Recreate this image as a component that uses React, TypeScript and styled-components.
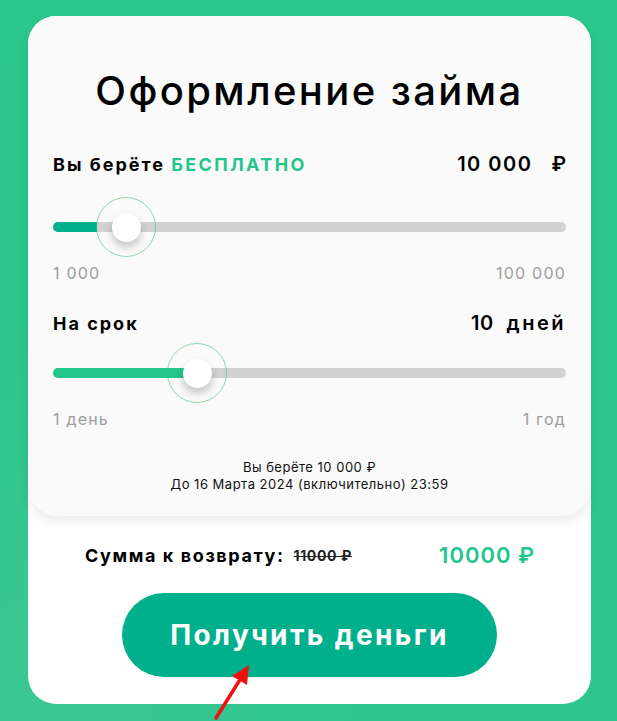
import React from "react";
import styled, { createGlobalStyle } from "styled-components";

const GlobalStyle = createGlobalStyle`
  html, body { margin: 0; padding: 0; }
  body {
    font-family: Inter, "DejaVu Sans", sans-serif;
    background: #2dc68d;
  }
  * { box-sizing: border-box; }
`;

const Page = styled.div`
  position: relative;
  width: 617px;
  height: 721px;
  padding: 16px 26px 17px 28px;
  background: radial-gradient(circle at 10% 95%, #3cc793 0%, #2dc68d 40%, #2bc78b 100%);
  overflow: hidden;
`;

const OuterCard = styled.div`
  width: 563px;
  height: 688px;
  background: #ffffff;
  border-radius: 28px;
  display: flex;
  flex-direction: column;
`;

const Calculator = styled.div`
  background: #fafafa;
  border-radius: 28px 28px 30px 30px;
  box-shadow: 0 6px 12px rgba(0, 0, 0, 0.08);
  padding: 51px 25px 23px;
  display: flex;
  flex-direction: column;
`;

const Title = styled.h1`
  margin: 0;
  font-size: 40px;
  line-height: 48px;
  font-weight: 500;
  letter-spacing: 2.4px;
  color: #000;
  text-align: center;
`;

const Row = styled.div<{ $top: number }>`
  margin-top: ${(p) => p.$top}px;
  display: flex;
  justify-content: space-between;
  align-items: center;
  height: 24px;
`;

const Label = styled.span<{ $spacing?: number }>`
  font-size: 18px;
  font-weight: 700;
  letter-spacing: ${(p) => p.$spacing ?? 2}px;
  color: #000;
`;

const Accent = styled.span`
  color: #22c68a;
  letter-spacing: 2.4px;
`;

const Value = styled.span`
  display: flex;
  align-items: baseline;
  font-size: 20px;
  font-weight: 600;
  color: #000;
`;

const Amount = styled.span<{ $spacing: number }>`
  letter-spacing: ${(p) => p.$spacing}px;
`;

const Unit = styled.span<{ $gap: number; $spacing?: number }>`
  margin-left: ${(p) => p.$gap}px;
  letter-spacing: ${(p) => p.$spacing ?? 0}px;
`;

const SliderBox = styled.div<{ $top: number }>`
  margin-top: ${(p) => p.$top}px;
  height: 60px;
  display: flex;
  align-items: center;
`;

const Track = styled.div`
  position: relative;
  width: 100%;
  height: 10px;
  border-radius: 5px;
  background: #d2d2d2;
`;

const Fill = styled.div<{ $color: string }>`
  position: absolute;
  left: 0;
  top: 0;
  height: 10px;
  border-radius: 5px 0 0 5px;
  background: ${(p) => p.$color};
`;

const Ring = styled.div`
  position: absolute;
  top: 50%;
  width: 60px;
  height: 60px;
  margin: -30px 0 0 -30px;
  border-radius: 50%;
  border: 1px solid rgba(60, 185, 110, 0.55);
`;

const Thumb = styled.div`
  position: absolute;
  top: 50%;
  width: 29px;
  height: 29px;
  margin: -14.5px 0 0 -14.5px;
  border-radius: 50%;
  background: #fff;
  box-shadow: 0 5px 9px rgba(0, 0, 0, 0.22);
`;

const Bounds = styled.div`
  margin-top: 6px;
  display: flex;
  justify-content: space-between;
  font-size: 16px;
  line-height: 20px;
  letter-spacing: 1.2px;
  color: #9d9d9d;
`;

const Note = styled.div`
  margin-top: 30px;
  text-align: center;
  font-size: 13px;
  line-height: 17px;
  letter-spacing: 0.5px;
  color: #111;
`;

const SumRow = styled.div`
  margin-top: 25px;
  padding: 0 56px 0 57px;
  height: 28px;
  display: flex;
  justify-content: space-between;
  align-items: center;
`;

const SumLeft = styled.div`
  display: flex;
  align-items: center;
  gap: 9px;
`;

const OldSum = styled.span`
  font-size: 14px;
  font-weight: 700;
  letter-spacing: 0.6px;
  color: #222;
  text-decoration: line-through;
`;

const NewSum = styled.span`
  font-size: 22px;
  font-weight: 600;
  letter-spacing: 1px;
  color: #22c68a;
`;

const Button = styled.button`
  margin: 24px auto 0;
  width: 375px;
  height: 84px;
  border: none;
  border-radius: 42px;
  background: #00b08c;
  color: #fff;
  font-family: inherit;
  font-size: 28px;
  font-weight: 700;
  letter-spacing: 2.4px;
  cursor: pointer;
`;

const Arrow = styled.svg`
  position: absolute;
  left: 205px;
  top: 660px;
  width: 50px;
  height: 61px;
  pointer-events: none;
`;

type SliderProps = { fill: number; thumb: number; color: string; top: number };

const Slider = ({ fill, thumb, color, top }: SliderProps) => (
  <SliderBox $top={top}>
    <Track>
      <Fill $color={color} style={{ width: fill }} />
      <Ring style={{ left: thumb }} />
      <Thumb style={{ left: thumb }} />
    </Track>
  </SliderBox>
);

export default function App() {
  return (
    <>
      <GlobalStyle />
      <Page>
        <OuterCard>
          <Calculator>
            <Title>Оформление займа</Title>
            <Row $top={37}>
              <Label>
                Вы берёте <Accent>БЕСПЛАТНО</Accent>
              </Label>
              <Value>
                <Amount $spacing={1.5}>10 000</Amount>
                <Unit $gap={19}>₽</Unit>
              </Value>
            </Row>
            <Slider top={21} fill={44} thumb={73} color="#00b08c" />
            <Bounds>
              <span>1 000</span>
              <span>100 000</span>
            </Bounds>
            <Row $top={28}>
              <Label>На срок</Label>
              <Value>
                <Amount $spacing={0.5}>10</Amount>
                <Unit $gap={13} $spacing={2.5}>дней</Unit>
              </Value>
            </Row>
            <Slider top={8} fill={131} thumb={144} color="#22c68a" />
            <Bounds>
              <span>1 день</span>
              <span>1 год</span>
            </Bounds>
            <Note>
              Вы берёте 10 000 ₽
              <br />
              До 16 Марта 2024 (включительно) 23:59
            </Note>
          </Calculator>
          <SumRow>
            <SumLeft>
              <Label $spacing={1.6}>Сумма к возврату:</Label>
              <OldSum>11000 ₽</OldSum>
            </SumLeft>
            <NewSum>10000 ₽</NewSum>
          </SumRow>
          <Button>Получить деньги</Button>
        </OuterCard>
        <Arrow viewBox="0 0 50 61">
          <line x1="11" y1="58" x2="36" y2="18" stroke="#f01010" strokeWidth="3.5" strokeLinecap="round" />
          <polygon points="44,5 42,25 27,16" fill="#f01010" />
        </Arrow>
      </Page>
    </>
  );
}
